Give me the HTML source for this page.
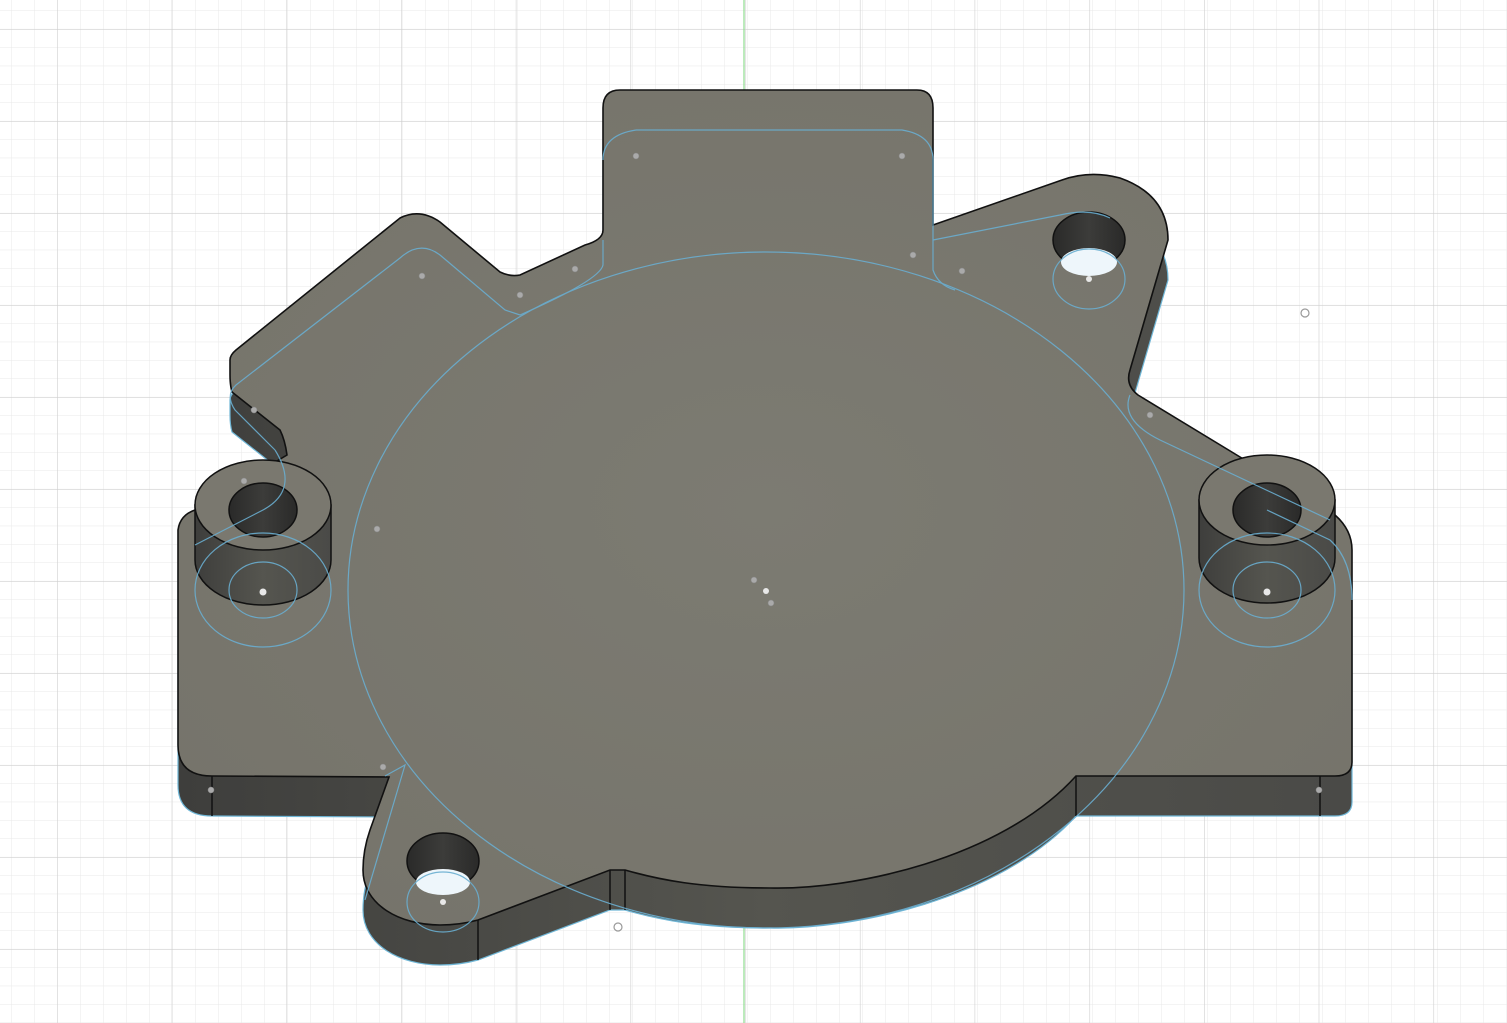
<!DOCTYPE html>
<html><head><meta charset="utf-8"><style>
html,body{margin:0;padding:0;background:#fff;}
svg{display:block;}
</style></head><body>
<svg width="1507" height="1023" viewBox="0 0 1507 1023" xmlns="http://www.w3.org/2000/svg">
<defs>
<pattern id="minor" width="23" height="18.4" patternUnits="userSpaceOnUse" x="11" y="10.5">
<path d="M0 0V18.4M0 0H23" stroke="#e9e9e9" stroke-width="1" fill="none"/>
</pattern>
<pattern id="major" width="114.7" height="92" patternUnits="userSpaceOnUse" x="57" y="29">
<path d="M0 0V92M0 0H114.7" stroke="#cfcfcf" stroke-width="1.2" fill="none"/>
</pattern>
<linearGradient id="side" x1="0" y1="0" x2="1" y2="0">
<stop offset="0" stop-color="#3e3e3c"/><stop offset="0.5" stop-color="#55554f"/><stop offset="1" stop-color="#4a4a47"/>
</linearGradient>
<radialGradient id="top" cx="0.5" cy="0.5" r="0.6">
<stop offset="0" stop-color="#7c7b72"/><stop offset="1" stop-color="#76746b"/>
</radialGradient>
<linearGradient id="hole" x1="0" y1="0" x2="1" y2="0">
<stop offset="0" stop-color="#2a2a29"/><stop offset="0.5" stop-color="#3c3c3a"/><stop offset="1" stop-color="#2a2a29"/>
</linearGradient>
</defs>
<rect width="1507" height="1023" fill="#fff"/>
<rect width="1507" height="1023" fill="url(#minor)"/>
<rect width="1507" height="1023" fill="url(#major)"/>
<line x1="744" y1="0" x2="744" y2="1023" stroke="#8fdc8f" stroke-width="1.2"/>

<g transform="translate(0,40)">
<path d="M620,90 L917,90 Q933,90 933,108 L933,225 L1062,180 Q1090,170 1120,178 Q1168,195 1168,240 L1130,370 Q1125,385 1138,395 L1245,460 L1335,515 Q1352,530 1352,550 L1352,762 Q1352,776 1335,776 L1076,776 C1000,860 850,890 770,888 C700,888 660,880 625,870 L610,870 L478,920 Q460,925 440,925 C400,925 363,905 363,870 Q363,850 370,830 L389,777 L212,776 Q178,776 178,745 L178,530 Q180,515 195,510 L287,455 Q285,440 280,430 L232,392 Q230,385 230,375 L230,360 Q230,355 236,350 L400,218 Q420,208 440,222 L500,272 Q510,277 520,275 L585,245 Q603,240 603,230 L603,108 Q603,90 620,90 Z" fill="url(#side)" stroke="#6fb6d6" stroke-width="1.2"/>
</g>
<line x1="212" y1="776" x2="212" y2="816" stroke="#111" stroke-width="1.5"/>
<line x1="1320" y1="776" x2="1320" y2="816" stroke="#111" stroke-width="1.5"/>
<line x1="478" y1="920" x2="478" y2="960" stroke="#111" stroke-width="1.5"/>
<line x1="610" y1="870" x2="610" y2="910" stroke="#111" stroke-width="1.5"/>
<line x1="625" y1="870" x2="625" y2="910" stroke="#111" stroke-width="1.5"/>
<line x1="1076" y1="776" x2="1076" y2="816" stroke="#111" stroke-width="1.5"/>

<path d="M620,90 L917,90 Q933,90 933,108 L933,225 L1062,180 Q1090,170 1120,178 Q1168,195 1168,240 L1130,370 Q1125,385 1138,395 L1245,460 L1335,515 Q1352,530 1352,550 L1352,762 Q1352,776 1335,776 L1076,776 C1000,860 850,890 770,888 C700,888 660,880 625,870 L610,870 L478,920 Q460,925 440,925 C400,925 363,905 363,870 Q363,850 370,830 L389,777 L212,776 Q178,776 178,745 L178,530 Q180,515 195,510 L287,455 Q285,440 280,430 L232,392 Q230,385 230,375 L230,360 Q230,355 236,350 L400,218 Q420,208 440,222 L500,272 Q510,277 520,275 L585,245 Q603,240 603,230 L603,108 Q603,90 620,90 Z" fill="url(#top)" stroke="#111" stroke-width="1.6"/>

<ellipse cx="1089" cy="240" rx="36" ry="28" fill="url(#hole)" stroke="#111" stroke-width="1.5"/>
<ellipse cx="1089" cy="262" rx="28" ry="14" fill="#eef6fb"/>
<ellipse cx="443" cy="861" rx="36" ry="28" fill="url(#hole)" stroke="#111" stroke-width="1.5"/>
<ellipse cx="443" cy="882" rx="27" ry="13" fill="#eef6fb"/>

<g>
<path d="M195,505 L195,560 A68,45 0 0 0 331,560 L331,505 Z" fill="url(#side)" stroke="#111" stroke-width="1.5"/>
<ellipse cx="263" cy="505" rx="68" ry="45" fill="#7a786f" stroke="#111" stroke-width="1.5"/>
<ellipse cx="263" cy="510" rx="34" ry="27" fill="url(#hole)" stroke="#111" stroke-width="1.5"/>
</g>
<g>
<path d="M1199,500 L1199,558 A68,45 0 0 0 1335,558 L1335,500 Z" fill="url(#side)" stroke="#111" stroke-width="1.5"/>
<ellipse cx="1267" cy="500" rx="68" ry="45" fill="#7a786f" stroke="#111" stroke-width="1.5"/>
<ellipse cx="1267" cy="510" rx="34" ry="27" fill="url(#hole)" stroke="#111" stroke-width="1.5"/>
</g>

<g fill="none" stroke="#6aaed0" stroke-width="1.2" opacity="0.9">
<ellipse cx="766" cy="590" rx="418" ry="338"/>
<path d="M636,130 L902,130 Q933,135 933,160 L933,270 Q938,285 955,290"/>
<path d="M603,160 Q603,135 636,130"/>
<path d="M603,240 L603,265 Q600,280 520,315 L505,310 L440,255 Q420,240 400,258 L236,385 Q225,395 235,410 L275,450"/>
<path d="M933,240 L1060,215 Q1090,208 1110,218"/>
<path d="M1130,395 Q1120,420 1160,440 L1330,520"/>
<path d="M385,776 L405,765 L365,900"/>
<ellipse cx="263" cy="590" rx="68" ry="57"/>
<ellipse cx="263" cy="590" rx="34" ry="28"/>
<ellipse cx="1267" cy="590" rx="68" ry="57"/>
<ellipse cx="1267" cy="590" rx="34" ry="28"/>
<ellipse cx="1089" cy="279" rx="36" ry="30"/>
<ellipse cx="443" cy="902" rx="36" ry="30"/>
<path d="M275,450 Q300,490 263,510 L195,545"/>
<path d="M1267,510 L1330,540 Q1352,560 1352,600"/>
</g>

<g fill="#aaa" stroke="#888" stroke-width="0.5">
<circle cx="636" cy="156" r="3"/><circle cx="902" cy="156" r="3"/><circle cx="913" cy="255" r="3"/>
<circle cx="962" cy="271" r="3"/><circle cx="575" cy="269" r="3"/><circle cx="520" cy="295" r="3"/>
<circle cx="422" cy="276" r="3"/><circle cx="254" cy="410" r="3"/><circle cx="244" cy="481" r="3"/>
<circle cx="377" cy="529" r="3"/><circle cx="383" cy="767" r="3"/><circle cx="211" cy="790" r="3"/>
<circle cx="1150" cy="415" r="3"/><circle cx="1319" cy="790" r="3"/><circle cx="754" cy="580" r="3"/>
<circle cx="771" cy="603" r="3"/>
</g>
<g fill="#e8e8e8">
<circle cx="263" cy="592" r="3.5"/><circle cx="1267" cy="592" r="3.5"/><circle cx="1089" cy="279" r="3"/>
<circle cx="443" cy="902" r="3"/><circle cx="766" cy="591" r="3"/>
</g>
<g fill="none" stroke="#999" stroke-width="1.2">
<circle cx="1305" cy="313" r="4"/><circle cx="618" cy="927" r="4"/>
</g>
</svg>
</body></html>
